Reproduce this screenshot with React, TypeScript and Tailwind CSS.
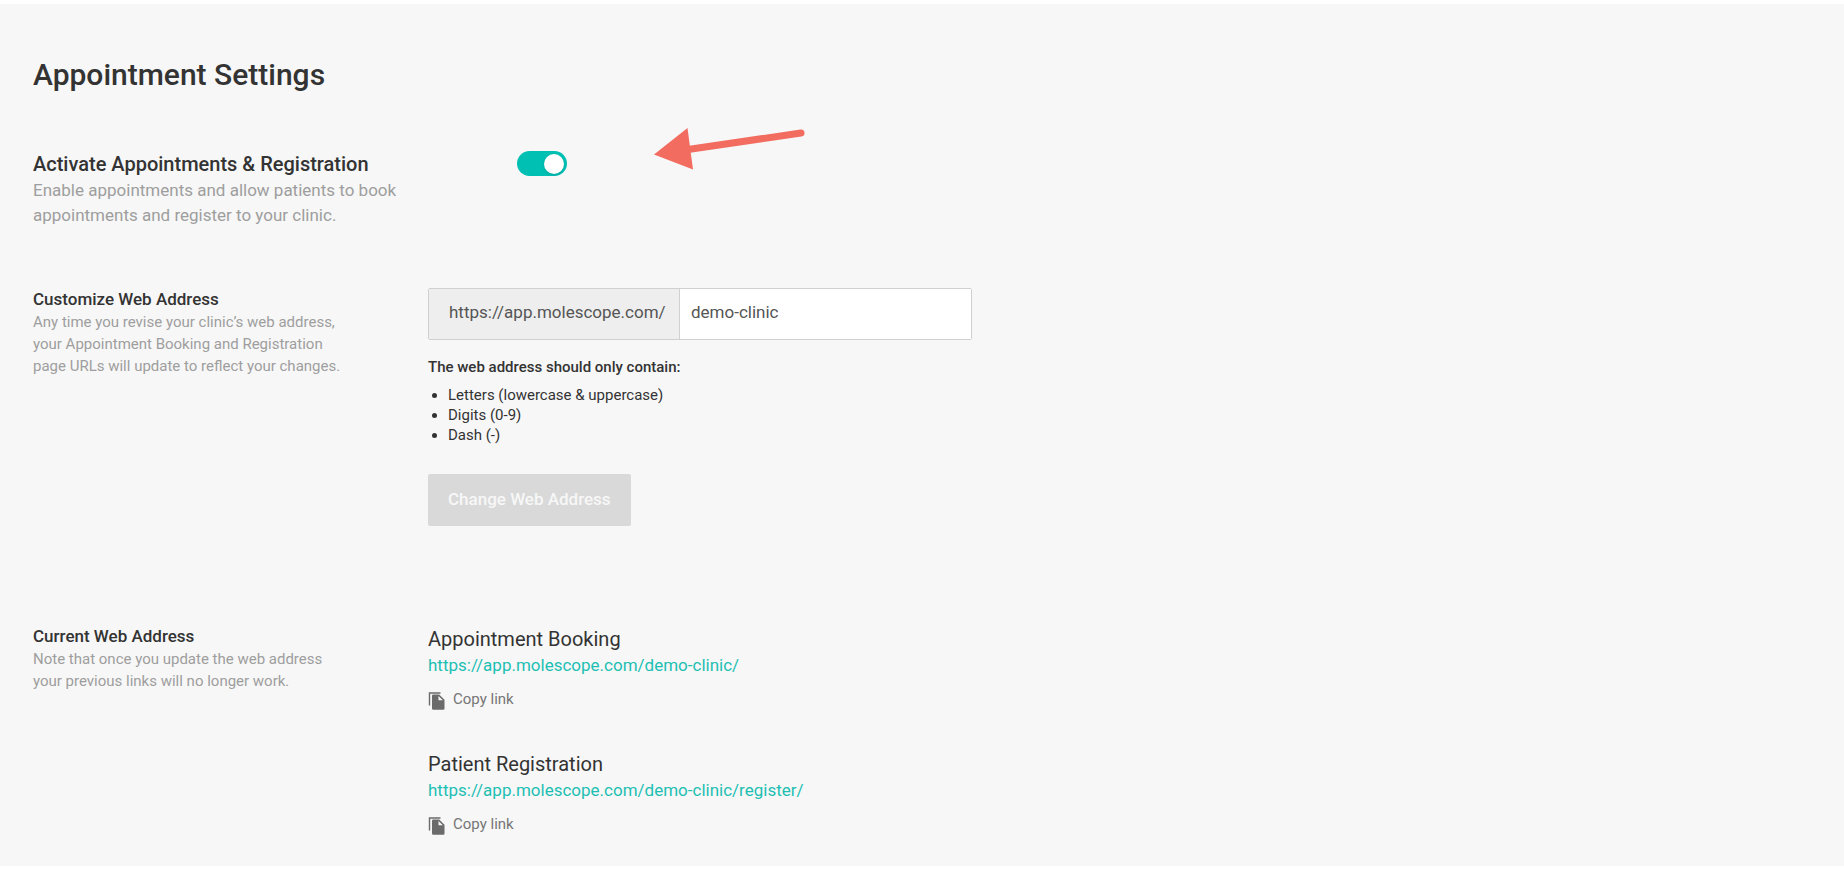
import { useState } from 'react';

const BASE_URL = 'https://app.molescope.com/';

const rules = ['Letters (lowercase & uppercase)', 'Digits (0-9)', 'Dash (-)'];

const links = [
  { title: 'Appointment Booking', path: 'demo-clinic/' },
  { title: 'Patient Registration', path: 'demo-clinic/register/' },
];

const CopyIcon = () => (
  <svg viewBox="0 0 17 18" className="w-[17px] h-[18px] shrink-0" fill="none" aria-hidden="true">
    <path d="M12.500 1H1.500V13.500" stroke="#6b6b6b" strokeWidth="1.400" />
    <path d="M5.200 2.500h6L16.500 7.800v8.700a1.200 1.200 0 0 1-1.200 1.200H5.200A1.200 1.200 0 0 1 4 16.500V3.700a1.200 1.200 0 0 1 1.200-1.200z" fill="#6b6b6b" />
    <path d="M10.500 4v4.200h4.300z" fill="#f7f7f7" />
  </svg>
);

const ArrowMark = () => (
  <svg viewBox="0 0 152 44" className="w-[152px] h-11" fill="#f26c60" aria-hidden="true">
    <path d="M0 26.500 33.500 0l5.500 41.500z" />
    <path d="M34 21.500 147 5" stroke="#f26c60" strokeWidth="7" strokeLinecap="round" />
  </svg>
);

export default function App() {
  const [active, setActive] = useState(true);
  const [address, setAddress] = useState('demo-clinic');

  return (
    <div className="min-h-screen flex flex-col bg-white pt-1 pb-[3px] font-[Roboto,sans-serif] text-[#333]">
      <main className="flex-1 bg-[#f7f7f7] px-[33px] pt-[53px] pb-6">
        <h1 className="text-[30px] leading-9 font-medium">Appointment Settings</h1>

        <section className="mt-[58px] flex items-start">
          <div className="w-[484px]">
            <label htmlFor="activate" className="block text-xl leading-[26px] font-medium">
              Activate Appointments &amp; Registration
            </label>
            <p className="mt-px w-[400px] text-[17px] leading-[25px] text-[#9e9e9e]">
              Enable appointments and allow patients to book appointments and register to your clinic.
            </p>
          </div>
          <label className="relative flex items-center w-[50px] h-[25px] cursor-pointer">
            <input
              id="activate"
              type="checkbox"
              role="switch"
              checked={active}
              onChange={(e) => setActive(e.target.checked)}
              className="peer appearance-none w-full h-full rounded-full bg-gray-300 checked:bg-[#00bfb3]"
            />
            <span className="absolute left-[3px] size-5 rounded-full bg-white shadow peer-checked:left-[27px]" />
          </label>
          <div className="-mt-[23px] ml-[87px]">
            <ArrowMark />
          </div>
        </section>

        <section className="mt-[60px] grid grid-cols-[395px_1fr]">
          <div>
            <h2 className="text-[17px] leading-[23px] font-medium">Customize Web Address</h2>
            <p className="w-[310px] text-[15px] leading-[22px] text-[#9e9e9e]">
              Any time you revise your clinic&rsquo;s web address, your Appointment Booking and Registration page URLs will update to reflect your changes.
            </p>
          </div>
          <div>
            <div className="flex w-[544px] h-[52px] rounded-xs border border-[#d0d0d0] text-[17px] text-[#555]">
              <label htmlFor="address" className="flex items-center w-[251px] pl-5 pb-[3px] bg-[#eee] border-r border-[#d0d0d0]">
                {BASE_URL}
              </label>
              <input
                id="address"
                type="text"
                value={address}
                onChange={(e) => setAddress(e.target.value)}
                className="flex-1 min-w-0 px-[11px] pb-[3px] bg-white outline-none"
              />
            </div>
            <p className="mt-4 text-[15px] leading-[22px] font-medium">The web address should only contain:</p>
            <ul className="mt-[7px] pl-5 list-disc text-[15px] leading-5">
              {rules.map((rule) => (
                <li key={rule}>{rule}</li>
              ))}
            </ul>
            <button type="button" disabled className="mt-[29px] h-[52px] px-5 pb-px rounded-xs bg-[#d9d9d9] text-[17px] font-medium text-[#f7f7f7]">
              Change Web Address
            </button>
          </div>
        </section>

        <section className="mt-[99px] grid grid-cols-[395px_1fr]">
          <div>
            <h2 className="text-[17px] leading-[23px] font-medium">Current Web Address</h2>
            <p className="w-[310px] text-[15px] leading-[22px] text-[#9e9e9e]">
              Note that once you update the web address your previous links will no longer work.
            </p>
          </div>
          <div className="pt-px space-y-[41px]">
            {links.map((link) => (
              <div key={link.path}>
                <h3 className="text-xl leading-[26px]">{link.title}</h3>
                <a href={BASE_URL + link.path} className="block w-fit text-[17px] leading-[26px] text-[#1dbfb3]">
                  {BASE_URL + link.path}
                </a>
                <button type="button" className="mt-2.5 flex items-end gap-2 text-[15px] leading-[22px] text-[#757575]">
                  <CopyIcon />
                  Copy link
                </button>
              </div>
            ))}
          </div>
        </section>
      </main>
    </div>
  );
}
